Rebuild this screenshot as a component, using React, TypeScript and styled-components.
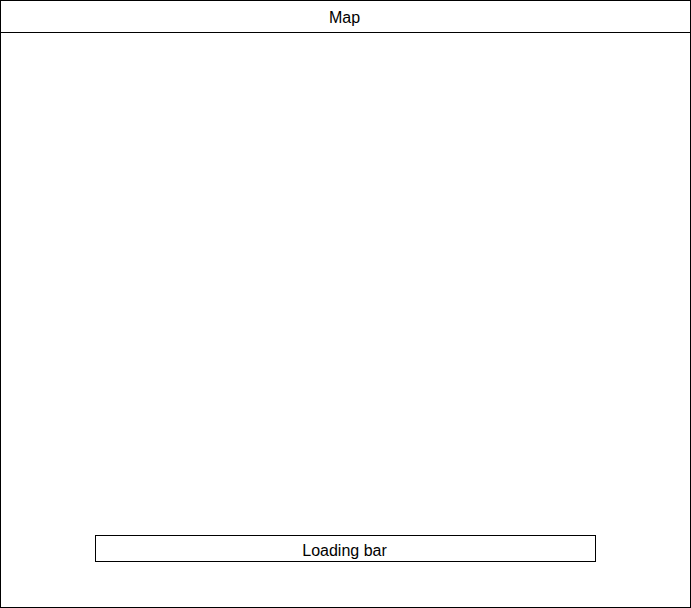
import React from "react";
import styled, { createGlobalStyle } from "styled-components";

const Global = createGlobalStyle`
  html, body { margin: 0; padding: 0; background: #fff; }
  * { box-sizing: border-box; }
`;

const Frame = styled.div`
  width: 691px;
  height: 608px;
  border: 1px solid #000;
  display: flex;
  flex-direction: column;
  font-family: "Liberation Sans", Arial, Helvetica, sans-serif;
  font-size: 16px;
  color: #000;
`;

const Header = styled.div`
  height: 32px;
  border-bottom: 1px solid #000;
  display: flex;
  align-items: center;
  justify-content: center;
  padding: 2px 2px 0 0;
  line-height: 18px;
`;

const MapArea = styled.div`
  flex: 1;
  display: flex;
  flex-direction: column;
  justify-content: flex-end;
  align-items: center;
  padding-bottom: 45px;
`;

const LoadingBar = styled.div`
  width: 501px;
  height: 27px;
  border: 1px solid #000;
  display: flex;
  align-items: center;
  justify-content: center;
  padding: 4px 2px 0 0;
  line-height: 18px;
`;

export default function App() {
  return (
    <>
      <Global />
      <Frame>
        <Header>Map</Header>
        <MapArea>
          <LoadingBar>Loading bar</LoadingBar>
        </MapArea>
      </Frame>
    </>
  );
}
